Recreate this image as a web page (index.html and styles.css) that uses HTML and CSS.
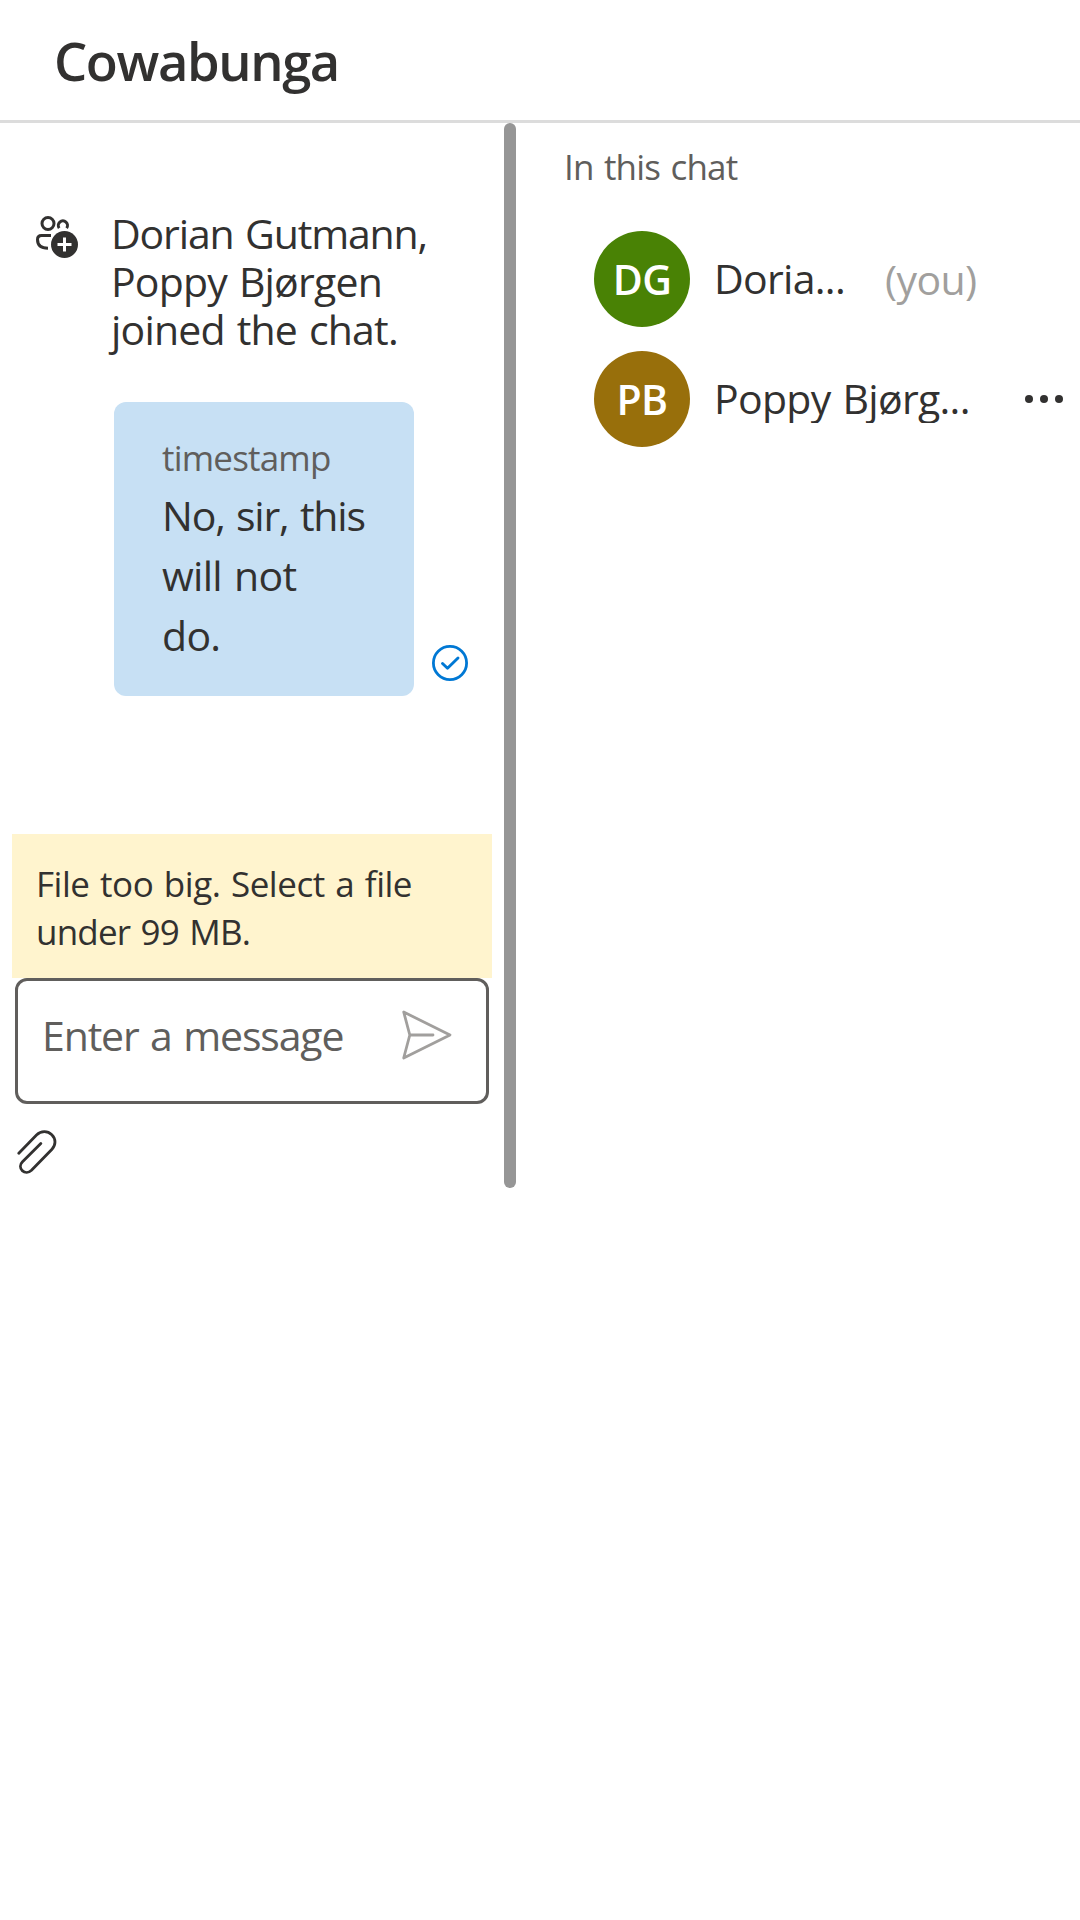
FILE: index.html
```html
<!DOCTYPE html>
<html lang="en">
<head>
<meta charset="utf-8">
<title>Cowabunga</title>
<link rel="stylesheet" href="styles.css">
</head>
<body>
<header class="header"><h1 class="title">Cowabunga</h1></header>
<main class="layout">
  <section class="chat">
    <div class="system">
      <svg class="system-icon" viewBox="0 0 42 42" width="42" height="42" fill="none" stroke="#323130" stroke-width="3">
        <circle cx="12" cy="7.5" r="6"/>
        <path d="M23.2 12.2A4.6 4.6 0 1 1 30.6 12.2"/>
        <path d="M15 19.5H5.5Q1.5 19.5 1.5 23.5C1.5 29 5 32.2 12 32.3"/>
        <circle cx="28.5" cy="28.5" r="13.5" fill="#323130" stroke="none"/>
        <path d="M28.5 21.5v14M21.5 28.5h14" stroke="#fff"/>
      </svg>
      <p class="system-text"><span class="line names">Dorian Gutmann,</span> <span class="line">Poppy Bjørgen</span> <span class="line">joined the chat.</span></p>
    </div>
    <div class="message">
      <div class="bubble">
        <div class="timestamp">timestamp</div>
        <p class="content"><span class="first">No, sir, this</span><br>will not<br>do.</p>
      </div>
      <svg class="status" viewBox="0 0 36 36" width="36" height="36" fill="none" stroke="#0078d4" stroke-linecap="round" stroke-linejoin="round">
        <circle cx="18" cy="18" r="16.6" stroke-width="2.8"/>
        <path d="M10.5 18.5L15.5 23.3L26 13" stroke-width="2.9"/>
      </svg>
    </div>
    <p class="warning"><span class="line problem">File too big. Select a file</span> <span class="line">under 99 MB.</span></p>
    <div class="composer">
      <span class="placeholder">Enter a message</span>
      <svg class="send" viewBox="0 0 50 50" width="50" height="50" fill="none" stroke="#a19f9d" stroke-width="2.8" stroke-linecap="round" stroke-linejoin="round">
        <path d="M1.700 2L48 25L1.700 48L7.800 25ZM7.800 25H31"/>
      </svg>
    </div>
    <svg class="attach" viewBox="0 0 42 44" width="42" height="44" fill="none" stroke="#323130" stroke-width="2.8" stroke-linecap="round">
      <path d="M1.800 23.200L19.500 5C24.200 .6 30.500 .6 34.800 4.700C39 8.800 39 15 35 19.200L14.500 40.300C11.700 43 7.800 43 5.200 40.600C2.800 38 2.800 34.400 5.500 31.700L23.800 13.500"/>
    </svg>
  </section>
  <div class="divider"></div>
  <aside class="people">
    <h2 class="people-title">In this chat</h2>
    <div class="person">
      <span class="avatar green">DG</span>
      <span class="name self">Doria...</span>
      <span class="you">(you)</span>
    </div>
    <div class="person">
      <span class="avatar gold">PB</span>
      <span class="name other">Poppy Bjørg...</span>
      <svg class="more" viewBox="0 0 40 10" width="40" height="10" fill="#323130">
        <circle cx="5" cy="5" r="4"/><circle cx="20" cy="5" r="4"/><circle cx="35" cy="5" r="4"/>
      </svg>
    </div>
  </aside>
</main>
</body>
</html>
```

FILE: styles.css
```css
* { box-sizing: border-box; margin: 0; padding: 0; }
body {
  width: 1080px;
  min-height: 1920px;
  background: #fff;
  color: #323130;
  font-family: "Segoe UI", "Open Sans", sans-serif;
  font-size: 41px;
  letter-spacing: -0.6px;
  word-spacing: 2px;
  white-space: nowrap;
}
svg { display: block; flex: none; }
.line { display: block; height: 48px; letter-spacing: -0.8px; }
.header {
  height: 123px;
  border-bottom: 3px solid #dcdcdc;
  padding: 2px 0 0 54px;
  display: flex;
  align-items: center;
}
.title { font-size: 52.5px; font-weight: 600; line-height: 60px; letter-spacing: -1.4px; }
.layout { display: grid; grid-template-columns: 504px 12px 564px; height: 1065px; }
.divider { background: #969696; border-radius: 6px; }
.chat { padding-top: 86px; }
.system { display: flex; padding-left: 36px; gap: 33px; }
.system-icon { margin-top: 7px; }
.system-text { line-height: 48px; }
.names { letter-spacing: -1.15px; }
.message { display: flex; align-items: flex-end; gap: 18px; margin: 49px 0 138px 114px; }
.bubble {
  width: 300px;
  height: 294px;
  padding: 32px 42px 0 48px;
  border-radius: 12px;
  background: #c7e0f4;
}
.timestamp { font-size: 35px; line-height: 48px; color: #605e5c; letter-spacing: -0.8px; }
.content { margin-top: 3px; line-height: 60px; letter-spacing: -0.7px; }
.first { letter-spacing: -1.2px; }
.status { margin-bottom: 15px; }
.warning {
  margin: 0 12px;
  height: 144px;
  padding: 26px 24px 0;
  background: #fff4ce;
  font-size: 35px;
  line-height: 48px;
}
.problem { letter-spacing: -0.48px; }
.composer {
  margin: 0 15px;
  height: 126px;
  border: 3px solid #605e5c;
  border-radius: 12px;
  padding: 29px 34px 0 24px;
  display: flex;
  justify-content: space-between;
  align-items: flex-start;
}
.placeholder { color: #605e5c; line-height: 54px; margin-top: -2px; letter-spacing: -1.15px; }
.attach { margin: 26px 0 0 17px; }
.people { padding-left: 48px; }
.people-title { font-size: 35px; font-weight: 400; line-height: 48px; color: #605e5c; padding-top: 20px; height: 96px; letter-spacing: -0.8px; }
.person { display: flex; align-items: center; height: 120px; padding-left: 30px; }
.avatar {
  width: 96px;
  height: 96px;
  border-radius: 50%;
  color: #fff;
  font-weight: 600;
  line-height: 96px;
  text-align: center;
  margin-right: 24px;
}
.green { background: #498205; }
.gold { background: #986f0b; }
.name { height: 48px; line-height: 47px; letter-spacing: -0.7px; }
.self { width: 171px; }
.other { width: 310px; overflow: hidden; }
.you { color: #a19f9d; line-height: 48px; }
```
